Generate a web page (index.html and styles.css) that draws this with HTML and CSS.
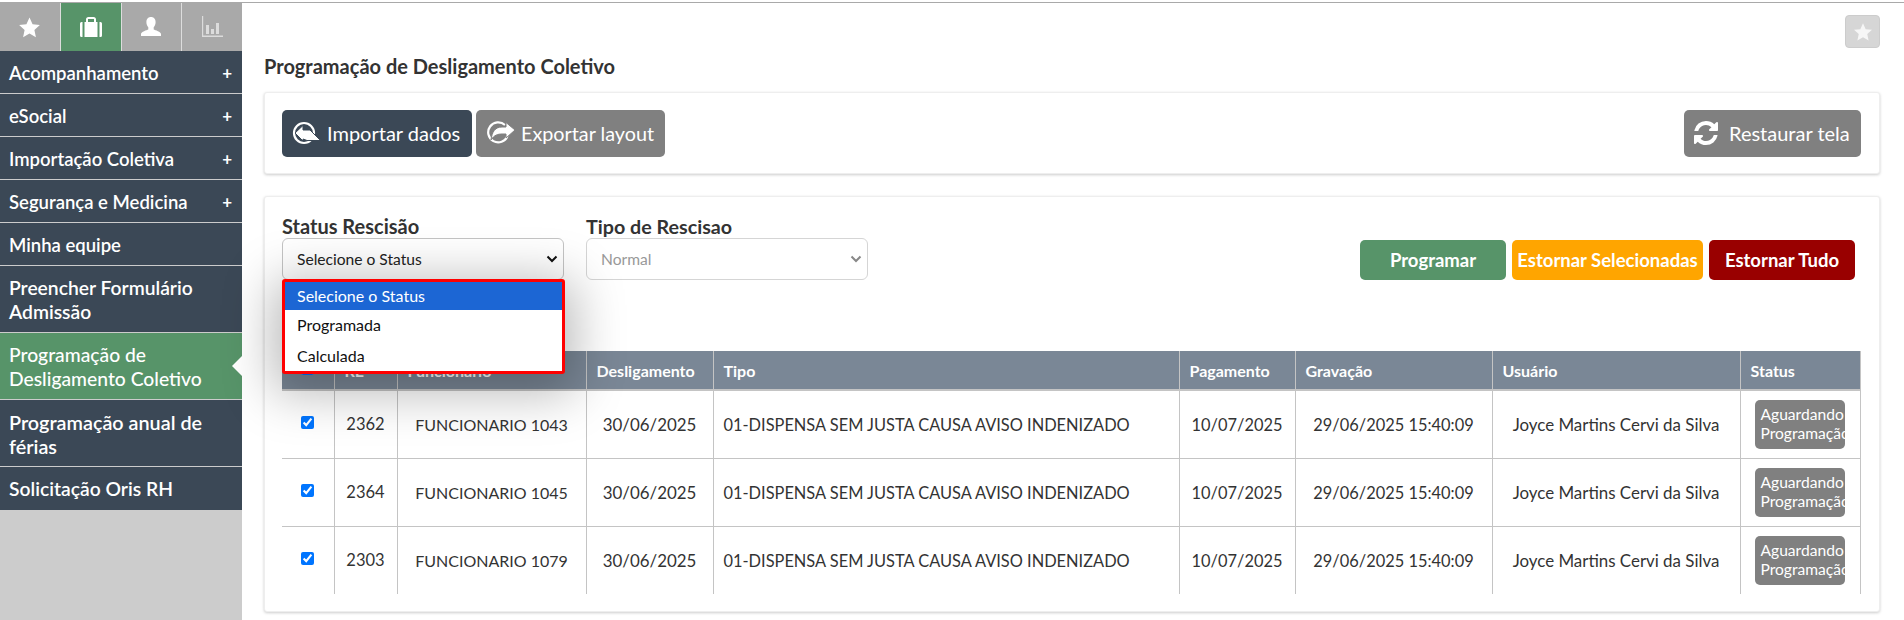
FILE: index.html
```html
<!DOCTYPE html>
<html lang="pt-BR">
<head>
<meta charset="utf-8">
<title>Programação de Desligamento Coletivo</title>
<link rel="stylesheet" href="styles.css">
</head>
<body>
<div class="page">
  <aside class="sidebar">
    <nav class="tabs">
      <a class="tab"><svg class="ico-star" viewBox="0 0 24 24"><path d="M12 1.500l3.200 7.100 7.600.8-5.700 5.100 1.600 7.600L12 18.200l-6.700 3.900 1.600-7.600L1.200 9.400l7.600-.8z"/></svg></a>
      <a class="tab tab-active"><svg class="ico-case" viewBox="0 0 22 22"><path d="M0 7.500q0-1.500 1.500-1.500H2.500V21H1.500Q0 21 0 19.500zM4.500 6H6V3.500Q6 1 8.500 1h5Q16 1 16 3.500V6h1.500V21H4.500zM8 6h6V3H8zM19.500 6h1Q22 6 22 7.500v12q0 1.500-1.500 1.500h-1z"/></svg></a>
      <a class="tab"><svg class="ico-user" viewBox="0 0 22 22"><path d="M11 1c3 0 4.600 2.200 4.600 5.200 0 2-.8 3.800-1.900 5v2.200c1.500.8 7.300 2 7.300 4.600v2H1v-2c0-2.600 5.800-3.800 7.300-4.600v-2.200c-1.100-1.200-1.900-3-1.900-5C6.400 3.200 8 1 11 1z"/></svg></a>
      <a class="tab"><svg class="ico-chart" viewBox="0 0 22 22"><path d="M1 0h1.200v19.500H22V21H1zM5 9h3v9H5zM10 13h3v5h-3zM15 7h3v11h-3z"/></svg></a>
    </nav>
    <ul class="menu">
      <li class="menu-item"><span>Acompanhamento</span><b class="plus">+</b></li>
      <li class="menu-item"><span>eSocial</span><b class="plus">+</b></li>
      <li class="menu-item"><span>Importação Coletiva</span><b class="plus">+</b></li>
      <li class="menu-item"><span>Segurança e Medicina</span><b class="plus">+</b></li>
      <li class="menu-item"><span>Minha equipe</span></li>
      <li class="menu-item menu-lg"><span>Preencher Formulário<br>Admissão</span></li>
      <li class="menu-item menu-lg menu-active"><span>Programação de<br>Desligamento Coletivo</span></li>
      <li class="menu-item menu-xl"><span>Programação anual de<br>férias</span></li>
      <li class="menu-item menu-lg"><span>Solicitação Oris RH</span></li>
    </ul>
  </aside>
  <main class="main">
    <div class="fav-row"><button class="fav"><svg class="ico-fav" viewBox="0 0 24 24"><path d="M12 1.500l3.200 7.100 7.600.8-5.700 5.100 1.600 7.600L12 18.200l-6.700 3.900 1.600-7.600L1.200 9.400l7.600-.8z"/></svg></button></div>
    <h1 class="title">Programação de Desligamento Coletivo</h1>
    <section class="card toolbar">
      <button class="btn btn-dark"><svg class="ico-io" viewBox="0 0 30 24"><circle cx="12" cy="12" r="10"/><path class="fill" d="M3 12l8-7.500v4.500h7l9 9 2 1.500H15l-4-1.500v2z"/></svg>Importar dados</button>
      <button class="btn btn-grey btn-export"><svg class="ico-io" viewBox="0 0 30 24"><path class="arc" d="M19 4A10 10 0 1 0 21.500 15"/><path class="fill" d="M29 9l-9-7.500v4.500h-4C9 6 6 11 5 19c3-5 7-6 11-6h4v4z"/></svg>Exportar layout</button>
      <button class="btn btn-grey btn-restore"><svg class="ico-refresh" viewBox="0 0 1536 1536"><path d="M1511 928q0 5-1 7-64 268-268 434.500t-478 166.500q-146 0-282.500-55t-243.500-157l-129 129q-19 19-45 19t-45-19-19-45v-448q0-26 19-45t45-19h448q26 0 45 19t19 45-19 45l-137 137q71 66 161 102t187 36q134 0 250-65t186-179q11-17 53-117 8-23 30-23h192q13 0 22.500 9.500t9.500 22.500zm25-800v448q0 26-19 45t-45 19h-448q-26 0-45-19t-19-45 19-45l138-138q-148-137-349-137-134 0-250 65t-186 179q-11 17-53 117-8 23-30 23h-199q-13 0-22.500-9.500t-9.500-22.500v-7q65-268 270-434.500t480-166.500q146 0 284 55.500t245 156.500l130-129q19-19 45-19t45 19 19 45z"/></svg>Restaurar tela</button>
    </section>
    <section class="card content">
      <div class="filters">
        <div class="field">
          <label class="field-label">Status Rescisão</label>
          <div class="select"><span>Selecione o Status</span><svg class="chev" viewBox="0 0 12 8"><path d="M1.500 1.500L6 6l4.500-4.500"/></svg></div>
          <ul class="dropdown">
            <li class="opt opt-on">Selecione o Status</li>
            <li class="opt">Programada</li>
            <li class="opt">Calculada</li>
          </ul>
        </div>
        <div class="field">
          <label class="field-label field-label-alt">Tipo de Rescisao</label>
          <div class="select select-off"><span>Normal</span><svg class="chev" viewBox="0 0 12 8"><path d="M1.500 1.500L6 6l4.500-4.500"/></svg></div>
        </div>
        <div class="actions">
          <button class="act act-green">Programar</button>
          <button class="act act-orange">Estornar Selecionadas</button>
          <button class="act act-red">Estornar Tudo</button>
        </div>
      </div>
      <table class="grid">
        <colgroup><col class="c1"><col class="c2"><col class="c3"><col class="c4"><col class="c5"><col class="c6"><col class="c7"><col class="c8"><col class="c9"></colgroup>
        <thead>
          <tr><th class="ctr"><input type="checkbox" checked></th><th>RE</th><th>Funcionario</th><th>Desligamento</th><th>Tipo</th><th>Pagamento</th><th>Gravação</th><th>Usuário</th><th>Status</th></tr>
        </thead>
        <tbody>
          <tr><td class="ctr"><input type="checkbox" checked></td><td class="ctr">2362</td><td class="ctr func">FUNCIONARIO 1043</td><td class="ctr wide">30/06/2025</td><td class="tipo">01-DISPENSA SEM JUSTA CAUSA AVISO INDENIZADO</td><td class="ctr tipo">10/07/2025</td><td class="ctr tipo">29/06/2025 15:40:09</td><td class="ctr wide">Joyce Martins Cervi da Silva</td><td class="ctr"><div class="badge">Aguardando Programação</div></td></tr>
          <tr><td class="ctr"><input type="checkbox" checked></td><td class="ctr">2364</td><td class="ctr func">FUNCIONARIO 1045</td><td class="ctr wide">30/06/2025</td><td class="tipo">01-DISPENSA SEM JUSTA CAUSA AVISO INDENIZADO</td><td class="ctr tipo">10/07/2025</td><td class="ctr tipo">29/06/2025 15:40:09</td><td class="ctr wide">Joyce Martins Cervi da Silva</td><td class="ctr"><div class="badge">Aguardando Programação</div></td></tr>
          <tr><td class="ctr"><input type="checkbox" checked></td><td class="ctr">2303</td><td class="ctr func">FUNCIONARIO 1079</td><td class="ctr wide">30/06/2025</td><td class="tipo">01-DISPENSA SEM JUSTA CAUSA AVISO INDENIZADO</td><td class="ctr tipo">10/07/2025</td><td class="ctr tipo">29/06/2025 15:40:09</td><td class="ctr wide">Joyce Martins Cervi da Silva</td><td class="ctr"><div class="badge">Aguardando Programação</div></td></tr>
        </tbody>
      </table>
    </section>
  </main>
</div>
</body>
</html>
```
FILE: styles.css
```css
* { box-sizing: border-box; }
html, body { margin: 0; height: 100%; overflow: hidden; }
body { font-family: Lato, "Noto Sans", sans-serif; color: #333; background: #fff; }
.page { display: flex; height: 620px; margin-top: 2px; border-top: 1px solid #a9a9a9; }
.sidebar { width: 242px; flex: none; background: #ccc; }
.tabs { display: flex; height: 48px; gap: 1px; background: #ddd; }
.tab { flex: 1; background: #a9a9a9; display: flex; align-items: center; justify-content: center; }
.tab-active { background: #579469; }
.tab svg { fill: #fff; }
.ico-star { width: 23px; height: 23px; }
.ico-case { width: 22px; height: 22px; }
.ico-user { width: 22px; height: 22px; }
.tab .ico-chart { width: 22px; height: 22px; fill: #dcdcdc; }
.menu { list-style: none; margin: 0; padding: 0; }
.menu-item { position: relative; display: flex; justify-content: space-between; background: #3b4856; color: #fff; font-size: 18.5px; font-weight: 600; line-height: 24px; padding: 10px 10px 8px 9px; border-bottom: 1px solid #ccc; }
.menu-lg { font-size: 19.3px; }
.menu-xl { font-size: 19.8px; }
.menu-item:last-child { border-bottom: 0; height: 43px; }
.menu-active { background: #579469; font-weight: 500; }
.menu-active::after { content: ""; position: absolute; right: 0; top: 23px; border: 10px solid transparent; border-right-color: #fff; border-left: 0; }
.plus { font-weight: 700; font-size: 17px; }
.main { flex: 1; padding: 0 24px 0 22px; }
.fav-row { display: flex; justify-content: flex-end; padding-top: 12px; height: 46px; }
.fav { width: 35px; height: 33px; padding: 0; border: 1px solid #ccc; border-radius: 4px; background: #d6d6d6; display: flex; align-items: center; justify-content: center; }
.ico-fav { width: 20px; height: 20px; fill: #f6f6f6; }
.title { margin: 0; height: 43px; font-size: 20px; font-weight: 700; line-height: 24px; padding-top: 5px; color: #333; }
.card { background: #fff; border: 1px solid #eee; border-radius: 3px; box-shadow: 0 1px 3px rgba(0,0,0,.2); }
.toolbar { height: 82px; display: flex; align-items: center; padding: 0 18px 0 17px; gap: 4px; }
.btn { height: 47px; display: flex; align-items: center; border: 0; border-radius: 5px; color: #fff; font: 400 20px Lato, sans-serif; padding: 0 10px; gap: 5px; }
.btn-dark { background: #3b4856; width: 190px; }
.btn-grey { background: #808080; }
.btn-export { width: 189px; font-size: 19.8px; }
.btn-restore { margin-left: auto; width: 177px; gap: 11px; }
.ico-io { width: 30px; height: 24px; flex: none; }
.ico-io circle, .ico-io .arc { fill: none; stroke: #fff; stroke-width: 2.2; }
.ico-io .fill { fill: #fff; }
.btn-dark .ico-io .fill { stroke: #3b4856; stroke-width: 1; }
.btn-grey .ico-io .fill { stroke: #808080; stroke-width: 1; }
.ico-refresh { width: 24px; height: 24px; fill: #fff; flex: none; }
.content { margin-top: 22px; height: 416px; padding: 18px 18px 0 17px; }
.filters { display: flex; height: 136px; align-items: flex-start; }
.field { position: relative; width: 282px; margin-right: 22px; }
.field-label { display: block; font-size: 20px; font-weight: 700; line-height: 23px; color: #333; }
.field-label-alt { font-size: 19.7px; }
.select { height: 42px; border: 1px solid #c4c4c4; border-radius: 6px; display: flex; align-items: center; justify-content: space-between; padding: 0 5px 0 14px; font-size: 15.6px; color: #222; }
.chev { width: 12px; height: 8px; fill: none; stroke: #111; stroke-width: 2; }
.select-off { color: #999; border-color: #d5d5d5; }
.select-off .chev { stroke: #888; }
.dropdown { position: absolute; left: 0; right: -1px; top: 64px; z-index: 5; list-style: none; margin: 0; padding: 0; height: 95px; background: #fff; border: 3px solid #f00; border-radius: 3px; box-shadow: 0 10px 50px 10px rgba(0,0,0,.27); }
.opt { height: 30.5px; line-height: 30px; padding: 0 12px; font-size: 16px; color: #111; }
.opt-on { height: 28px; line-height: 28px; background: #1c66d4; color: #fff; }
.actions { margin-left: auto; padding-top: 25px; display: flex; gap: 6px; padding-right: 6px; }
.act { height: 40px; border: 0; border-radius: 5px; color: #fff; font: 700 18.5px Lato, sans-serif; padding: 0; }
.act-green { background: #579469; width: 146px; }
.act-orange { background: #ffa500; width: 191px; }
.act-red { background: #990000; width: 146px; }
.grid { width: 1578px; table-layout: fixed; border-collapse: collapse; font-size: 16.5px; color: #333; }
.c1 { width: 52px; } .c2 { width: 63px; } .c3 { width: 189px; } .c4 { width: 127px; } .c5 { width: 466px; } .c6 { width: 116px; } .c7 { width: 197px; } .c8 { width: 248px; } .c9 { width: 120px; }
.grid th { height: 39px; background: #7a8796; color: #fff; font-size: 16px; font-weight: 700; text-align: left; padding: 0 10px; border-left: 1px solid #c4c4c4; border-bottom: 2px solid #c4c4c4; }
.grid th:first-child, .grid td:first-child { border-left: 0; }
.grid th:last-child, .grid td:last-child { border-right: 1px solid #c4c4c4; }
.grid td { height: 68px; padding: 0 10px; border-left: 1px solid #c4c4c4; border-bottom: 1px solid #c4c4c4; }
.grid tr:last-child td { border-bottom: 0; }
.grid .ctr { text-align: center; padding: 0 2px; }
.grid .func { font-size: 16px; }
.grid .wide { font-size: 16.9px; }
.grid .tipo { font-size: 16.4px; }
.grid input { margin: 0 0 6px; width: 13px; height: 13px; vertical-align: middle; }
.badge { width: 90px; height: 49px; margin: 0 0 0 12px; background: #808080; color: #fff; border-radius: 5px; font-size: 15.6px; line-height: 19px; padding: 5px 0 0 6px; text-align: left; overflow: hidden; }
```
